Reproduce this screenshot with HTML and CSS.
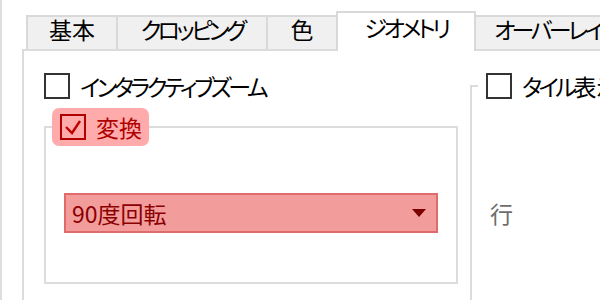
FILE: index.html
```html
<!DOCTYPE html>
<html lang="ja">
<head>
<meta charset="utf-8">
<link rel="stylesheet" href="styles.css">
</head>
<body>
<div class="window">
  <div class="tabs">
    <div class="tab tab-basic">基本</div>
    <div class="tab tab-crop"><span class="kana">クロッピング</span></div>
    <div class="tab tab-color">色</div>
    <div class="tab tab-active tab-geo"><span class="kana">ジオメトリ</span></div>
    <div class="tab tab-overlay"><span class="kana">オーバーレイ</span></div>
  </div>
  <div class="panel">
    <div class="col-left">
      <div class="check-row"><span class="box"></span><span class="label kana">インタラクティブズーム</span></div>
      <fieldset class="group">
        <legend class="legend legend-hl">
          <span class="box box-checked"><svg class="check" viewBox="0 0 22 22" width="22" height="22"><polyline points="4,11 10,17 18,5" fill="none" stroke="#c00000" stroke-width="2.4"/></svg></span>
          <span class="label">変換</span>
        </legend>
        <div class="group-body">
          <div class="select">
            <span class="select-text">90度回転</span>
            <svg class="arrow" viewBox="0 0 14 8" width="14" height="8"><polygon points="0,0 14,0 7,8" fill="#7a0000"/></svg>
          </div>
        </div>
      </fieldset>
      <div class="check-row check-sub"><span class="box"></span><span class="label">画面回転</span></div>
    </div>
    <div class="col-right">
      <fieldset class="group group-right">
        <legend class="legend">
          <span class="box"></span>
          <span class="label"><span class="kana">タイル</span>表示</span>
        </legend>
        <div class="group-body right-body">
          <span class="dim">行</span>
        </div>
      </fieldset>
    </div>
  </div>
</div>
</body>
</html>
```
FILE: styles.css
```css
html, body {
  margin: 0;
  padding: 0;
  background: #ffffff;
}
body {
  width: 600px;
  height: 300px;
  overflow: hidden;
  font-family: "Noto Sans CJK JP", "Noto Sans", sans-serif;
  font-size: 23px;
  font-feature-settings: "palt";
  color: #000000;
}
.kana {
  letter-spacing: -3.5px;
}
.window {
  box-sizing: border-box;
  height: 300px;
  width: 600px;
  overflow: hidden;
  border-left: 2px solid #dedede;
  padding-left: 20px;
}
.tabs {
  display: flex;
  align-items: flex-end;
  height: 49px;
  padding-left: 4px;
}
.tab {
  box-sizing: border-box;
  height: 34px;
  border: 2px solid #d9d9d9;
  border-bottom: none;
  background: #f0f0f0;
  margin-left: -2px;
  display: flex;
  justify-content: center;
  align-items: flex-start;
  padding-top: 1px;
  line-height: 23px;
  white-space: nowrap;
  flex-shrink: 0;
}
.tab:first-child {
  margin-left: 0;
}
.tab-basic { width: 92px; }
.tab-crop { width: 152px; }
.tab-color { width: 72px; }
.tab-geo { width: 140px; }
.tab-overlay { width: 150px; justify-content: flex-start; padding-left: 18px; }
.tab-active {
  height: 40px;
  margin-bottom: -2px;
  background: #ffffff;
  padding-top: 3px;
  position: relative;
  z-index: 1;
}
.panel {
  box-sizing: border-box;
  height: 251px;
  width: 700px;
  border-top: 2px solid #dcdcdc;
  border-left: 2px solid #dcdcdc;
  padding: 16px 0 0 20px;
  display: flex;
  gap: 12px;
}
.col-left {
  width: 414px;
  flex-shrink: 0;
}
.col-right {
  width: 250px;
  flex-shrink: 0;
}
.check-row {
  display: flex;
  align-items: center;
  gap: 10px;
  height: 38px;
  white-space: nowrap;
}
.check-sub {
  margin-left: 16px;
  margin-top: 10px;
}
.box {
  box-sizing: border-box;
  width: 26px;
  height: 26px;
  border: 2px solid #333333;
  background: #ffffff;
  flex-shrink: 0;
  display: flex;
}
.box-checked {
  border-color: #b00000;
  background: transparent;
}
.check {
  display: block;
}
.label {
  line-height: 26px;
}
.group {
  margin: 3px 0 0 0;
  padding: 0;
  border: 2px solid #dcdcdc;
  min-width: 0;
}
.legend {
  display: flex;
  align-items: center;
  gap: 10px;
  height: 38px;
  box-sizing: border-box;
  padding: 0 8px;
  margin-left: 6px;
  white-space: nowrap;
}
.legend-hl {
  background: #ffabab;
  border-radius: 7px;
  color: #b00000;
  padding-right: 7px;
}
.group-body {
  padding: 47px 18px 49px 18px;
}
.select {
  box-sizing: border-box;
  height: 40px;
  border: 2px solid #df6b6b;
  background: #f29c9c;
  display: flex;
  align-items: center;
  justify-content: space-between;
  padding: 0 10px 0 6px;
  color: #8a0000;
}
.arrow {
  display: block;
}
.group-right {
  margin-top: 0;
  height: 300px;
  border-right: none;
}
.right-body {
  padding: 91px 18px 0 18px;
}
.dim {
  color: #6d6d6d;
}
```
